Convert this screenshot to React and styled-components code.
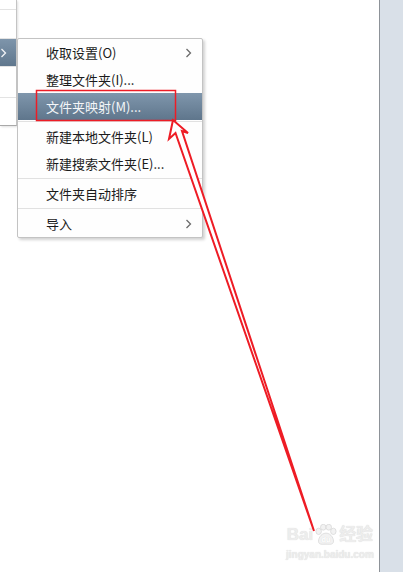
import React from 'react'
import styled, { createGlobalStyle } from 'styled-components';

const GlobalStyle = createGlobalStyle`
  html, body {
    margin: 0;
    padding: 0;
    background: #ffffff;
  }
  body {
    font-family: "Noto Sans CJK SC", "Noto Sans", sans-serif;
  }
`

const Page = styled.div`
  position: relative;
  width: 403px;
  height: 572px;
  display: flex;
  overflow: hidden;
  background: #ffffff;
`

const ParentPane = styled.div`
  width: 16px;
  height: 125px;
  display: flex;
  flex-direction: column;
  border-right: 1px solid #c4c4c4;
  border-bottom: 1px solid #a9a9a9;
  box-shadow: 1px 1px 2px rgba(0, 0, 0, 0.12);
  background: #ffffff;
`

const ParentRow = styled.div`
  height: ${props => props.h}px;
  flex: none;
  display: flex;
  align-items: center;
  border-bottom: 1px solid ${props => props.last ? 'transparent' : '#e3e3e3'};
  background: ${props => props.active ? 'linear-gradient(#7e95ab, #60778d)' : 'transparent'};
`

const Main = styled.div`
  flex: 1;
`

const SidePane = styled.div`
  width: 23px;
  border-left: 1px solid #8d9298;
  background: #d9e0e8;
  position: relative;
  z-index: 1;
`

const Menu = styled.div`
  position: absolute;
  left: 17px;
  top: 38px;
  width: 184px;
  display: flex;
  flex-direction: column;
  background: #fefefe;
  border: 1px solid #c3c3c3;
  border-radius: 2px;
  box-shadow: 2px 2px 3px rgba(0, 0, 0, 0.18);
`

const Item = styled.div`
  height: 27px;
  display: flex;
  align-items: center;
  justify-content: space-between;
  padding: 0 10px 0 28px;
  font-size: 13px;
  color: ${props => props.active ? '#f4f6f8' : '#1b1b1b'};
  background: ${props => props.active ? 'linear-gradient(#7f96ac, #5f768c)' : 'transparent'};
  white-space: nowrap;
`

const Separator = styled.div`
  height: 1px;
  margin: 1px 0;
  background: #e1e1e1;
`

const Overlay = styled.svg`
  position: absolute;
  left: 0;
  top: 0;
  pointer-events: none;
`

const Watermark = styled.div`
  position: absolute;
  left: 286px;
  top: 524px;
  display: flex;
  flex-direction: column;
  align-items: center;
  color: #ededed;
  font-family: "Liberation Sans", "Noto Sans CJK SC", sans-serif;
  text-shadow: 0 0 1px #d4d4d4;
`

const MarkTitle = styled.div`
  display: flex;
  align-items: center;
  gap: 1px;
  font-size: 17px;
  font-weight: bold;
  line-height: 20px;
`

const MarkUrl = styled.div`
  font-size: 10px;
  font-weight: bold;
  line-height: 12px;
  margin-top: 3px;
`

const Chevron = ({ color = '#6b6b6b' }) => (
  <svg width="7" height="10" viewBox="0 0 7 10">
    <polyline points="1.5,1 5.5,5 1.5,9" fill="none" stroke={color} strokeWidth="1.3" />
  </svg>
)

const items = [
  { label: '收取设置(O)', sub: true },
  { label: '整理文件夹(I)...' },
  { label: '文件夹映射(M)...', active: true },
  'sep',
  { label: '新建本地文件夹(L)' },
  { label: '新建搜索文件夹(E)...' },
  'sep',
  { label: '文件夹自动排序' },
  'sep',
  { label: '导入', sub: true },
]

export default function App() {
  return (
    <>
      <GlobalStyle />
      <Page>
        <ParentPane>
          <ParentRow h={9} />
          <ParentRow h={28} />
          <ParentRow h={27} active>
            <Chevron color="#f2f4f6" />
          </ParentRow>
          <ParentRow h={30} />
          <ParentRow h={26} last />
        </ParentPane>
        <Main />
        <SidePane />

        <Menu>
          {items.map((it, i) => it === 'sep'
            ? <Separator key={i} />
            : (
              <Item key={i} active={it.active}>
                <span>{it.label}</span>
                {it.sub && <Chevron />}
              </Item>
            ))}
        </Menu>

        <Watermark>
          <MarkTitle>
            <span>Bai</span>
            <svg width="24" height="22" viewBox="0 0 26 24">
              <g fill="#f2f2f2" stroke="#d6d6d6" strokeWidth="0.8">
                <ellipse cx="5" cy="8" rx="3" ry="3.5" />
                <ellipse cx="10" cy="3.5" rx="3" ry="3.2" />
                <ellipse cx="16" cy="3.5" rx="3" ry="3.2" />
                <ellipse cx="21" cy="8" rx="3" ry="3.5" />
                <path d="M13 10 C7 10 4 17 5 20 C6 23 10 22 13 22 C16 22 20 23 21 20 C22 17 19 10 13 10 Z" />
              </g>
              <text x="13" y="20" fontSize="8" fontWeight="bold" textAnchor="middle" fill="#ffffff" stroke="none">du</text>
            </svg>
            <span>经验</span>
          </MarkTitle>
          <MarkUrl>jingyan.baidu.com</MarkUrl>
        </Watermark>

        <Overlay width="403" height="572" viewBox="0 0 403 572">
          <rect x="36.5" y="90.5" width="139" height="30" fill="none" stroke="#ee1c25" strokeWidth="1.5" />
          <polygon
            points="173,120 169,139 175.5,133 314,531 182,131 188,133"
            fill="#ffffff"
            stroke="#ee1c25"
            strokeWidth="2"
            strokeLinejoin="miter"
          />
        </Overlay>
      </Page>
    </>
  )
}
